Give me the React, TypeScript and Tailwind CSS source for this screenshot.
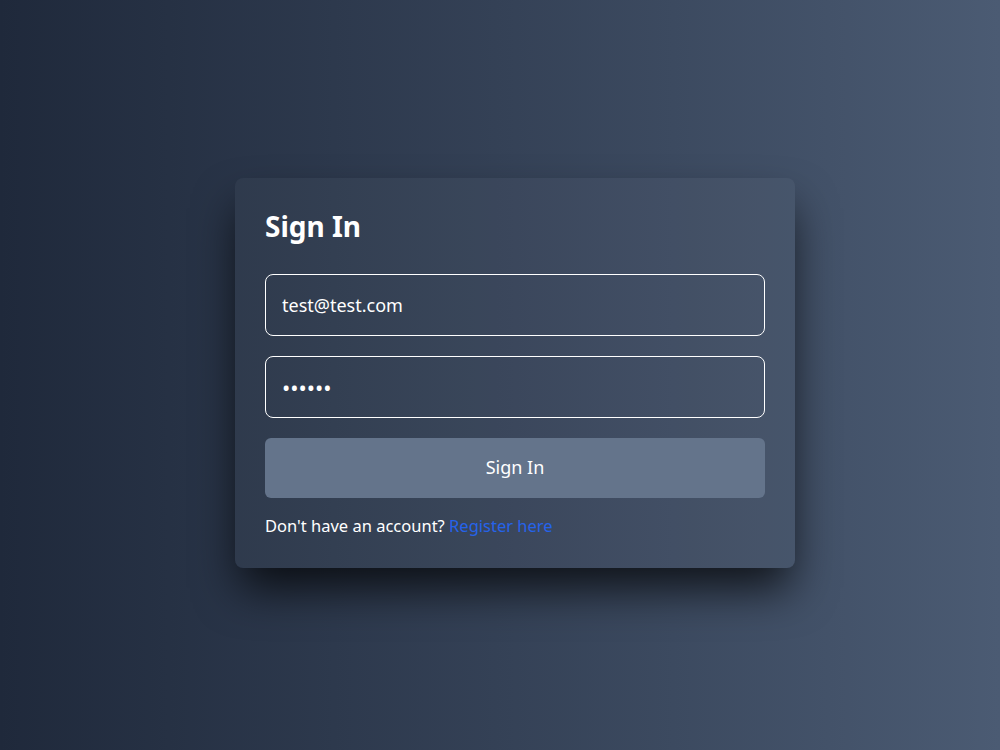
import React from "react";

export default function App() {
  return (
    <div
      className="min-h-screen w-full flex items-center justify-center pl-[30px] pb-[4px] bg-gradient-to-r from-[#1f293b] to-[#4b5b73]"
      style={{ fontFamily: '"Noto Sans", "Open Sans", sans-serif' }}
    >
      <div className="w-[560px] rounded-lg bg-white/[0.03] p-[30px] shadow-[0_25px_45px_-5px_rgba(0,0,0,0.75)]">
        <h1 className="text-[28px] leading-[36px] font-bold text-white mb-[30px]">Sign In</h1>
        <div className="flex flex-col gap-5">
          <input
            type="email"
            readOnly
            value="test@test.com"
            className="h-[62px] w-full rounded-lg border border-white bg-transparent px-4 text-[18px] text-white outline-none"
          />
          <input
            type="password"
            readOnly
            value="123456"
            className="h-[62px] w-full rounded-lg border border-white bg-transparent px-4 text-[22px] text-white outline-none"
          />
          <button className="h-[60px] w-full rounded-md bg-[#64748b] text-[18px] text-white">Sign In</button>
        </div>
        <p className="mt-[16px] text-[16.5px] text-white">
          Don't have an account? <span className="text-[#2563eb]">Register here</span>
        </p>
      </div>
    </div>
  );
}
